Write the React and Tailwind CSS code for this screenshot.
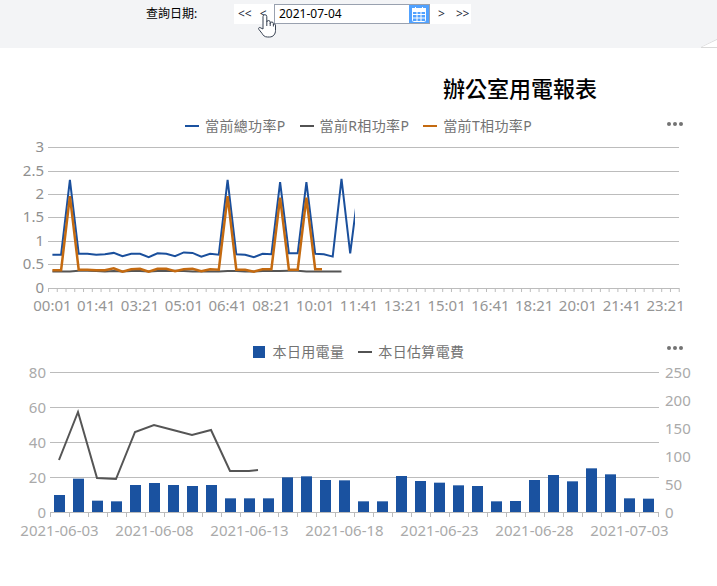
import React from 'react';

const TIMES = ['00:01', '01:41', '03:21', '05:01', '06:41', '08:21', '10:01', '11:41', '13:21', '15:01', '16:41', '18:21', '20:01', '21:41', '23:21'];
const DATES = ['2021-06-03', '2021-06-08', '2021-06-13', '2021-06-18', '2021-06-23', '2021-06-28', '2021-07-03'];

const TOTAL = [0.7, 0.7, 2.3, 0.72, 0.72, 0.7, 0.71, 0.74, 0.67, 0.72, 0.72, 0.65, 0.73, 0.72, 0.67, 0.75, 0.74, 0.66, 0.72, 0.7, 2.3, 0.71, 0.7, 0.65, 0.72, 0.71, 2.25, 0.73, 0.73, 2.25, 0.72, 0.71, 0.66, 2.32, 0.73, 2.2];
const PHASE_R = [0.34, 0.34, 0.34, 0.36, 0.36, 0.35, 0.34, 0.35, 0.34, 0.35, 0.35, 0.34, 0.35, 0.35, 0.36, 0.35, 0.34, 0.34, 0.34, 0.34, 0.35, 0.35, 0.34, 0.34, 0.35, 0.35, 0.35, 0.36, 0.36, 0.34, 0.34, 0.34, 0.34, 0.34];
const PHASE_T = [0.37, 0.37, 1.95, 0.38, 0.38, 0.37, 0.37, 0.41, 0.34, 0.39, 0.4, 0.34, 0.4, 0.4, 0.35, 0.39, 0.4, 0.35, 0.39, 0.38, 1.95, 0.38, 0.38, 0.34, 0.39, 0.39, 1.92, 0.38, 0.38, 1.92, 0.39, 0.39];
// top edge of each bar, read off the picture
const BAR_TOPS = [480, 431, 497, 499, 450, 444, 450, 453, 450, 490, 490, 490, 427, 424, 435, 436, 499, 499, 423, 438, 443, 451, 453, 499, 498, 435, 420, 439, 400, 418, 490, 491];
const COST = [[59, 460], [78, 412], [97, 478], [116, 479], [135, 432], [154, 425], [173, 430], [192, 435], [211, 430], [230, 471], [249, 471], [258, 470]];

const gridColor = '#bcbcbc';

function Legend({ children, dotsTop }) {
    return (
        <div className="relative flex h-5 items-center justify-center gap-3.5 text-sm tracking-wide text-neutral-500">
            {children}
            <div className={`absolute right-8.5 flex gap-0.5 ${dotsTop}`}>
                <span className="size-1 rounded-full bg-neutral-500" />
                <span className="size-1 rounded-full bg-neutral-500" />
                <span className="size-1 rounded-full bg-neutral-500" />
            </div>
        </div>
    );
}

function LineKey({ className, label }) {
    return (
        <div className="flex items-center gap-1.5">
            <span className={`h-0.5 w-3.5 ${className}`} />
            <span>{label}</span>
        </div>
    );
}

function PowerChart() {
    const x = (i) => 48 + 8.76 * (i + 0.5);
    const y = (v) => 287.5 - v * 46.8;
    const points = (data) => data.map((v, i) => `${x(i).toFixed(1)},${y(v).toFixed(1)}`).join(' ');

    return (
        <svg className="block" width="717" height="190" viewBox="0 136 717 190">
            <defs>
                <clipPath id="total-clip"><rect x="48" y="136" width="307" height="160" /></clipPath>
                <clipPath id="t-clip"><rect x="48" y="136" width="274" height="160" /></clipPath>
            </defs>
            {[0, 0.5, 1, 1.5, 2, 2.5, 3].map((v) => (
                <g key={v}>
                    <line x1="48" x2="679" y1={Math.round(y(v)) + 0.5} y2={Math.round(y(v)) + 0.5} stroke={gridColor} />
                    <text x="44" y={y(v) + 5} textAnchor="end" fontSize="15" fill="#8f8f8f">{v}</text>
                </g>
            ))}
            {Array.from({ length: 73 }, (_, i) => (
                <line key={i} x1={48.5 + 8.76 * i} x2={48.5 + 8.76 * i} y1="288" y2="292" stroke={gridColor} />
            ))}
            {TIMES.map((t, i) => (
                <text key={t} x={52.4 + 43.8 * i} y="311" textAnchor="middle" fontSize="15" fill="#969696">{t}</text>
            ))}
            <polyline points={points(TOTAL)} fill="none" stroke="#1a4f9c" strokeWidth="2" clipPath="url(#total-clip)" />
            <polyline points={points(PHASE_R)} fill="none" stroke="#555555" strokeWidth="2" />
            <polyline points={points(PHASE_T)} fill="none" stroke="#c46a10" strokeWidth="2.5" clipPath="url(#t-clip)" />
        </svg>
    );
}

function EnergyChart() {
    const yTicks = [0, 20, 40, 60, 80];
    const rightTicks = [0, 50, 100, 150, 200, 250];

    return (
        <svg className="block" width="717" height="190" viewBox="0 362 717 190">
            {yTicks.map((v, i) => {
                const y = 512.5 - i * 35;
                return (
                    <g key={v}>
                        <line x1="50" x2="659" y1={y} y2={y} stroke={gridColor} />
                        <text x="46" y={y + 5} textAnchor="end" fontSize="15" fill="#aaaaaa">{v}</text>
                    </g>
                );
            })}
            {rightTicks.map((v, i) => (
                <text key={v} x="665" y={512.5 - i * 28 + 5} fontSize="15" fill="#aaaaaa">{v}</text>
            ))}
            {Array.from({ length: 33 }, (_, i) => (
                <line key={i} x1={50.5 + 19 * i} x2={50.5 + 19 * i} y1="513" y2="517" stroke={gridColor} />
            ))}
            {BAR_TOPS.map((top, i) => {
                const y = 335 + top / 3;
                return <rect key={i} x={54 + 19 * i} y={y} width="11" height={512 - y} fill="#1a52a0" />;
            })}
            <polyline points={COST.map((p) => p.join(',')).join(' ')} fill="none" stroke="#555555" strokeWidth="2" />
            {DATES.map((d, i) => (
                <text key={d} x={59.5 + 95 * i} y="536" textAnchor="middle" fontSize="15" fill="#aaaaaa">{d}</text>
            ))}
        </svg>
    );
}

function CalendarIcon() {
    return (
        <svg width="14" height="15" viewBox="0 0 14 15" fill="none" stroke="white">
            <rect x="0.5" y="1.5" width="13" height="13" rx="1" />
            <rect x="0.5" y="1.5" width="13" height="3" fill="white" />
            <path d="M3.5 0v3M10.5 0v3M0.5 7.5h13M0.5 11h13M5 4.5v10M9 4.5v10" />
        </svg>
    );
}

function HandCursor() {
    return (
        <svg className="absolute left-64.5 top-3.5" width="18" height="24" viewBox="0 0 18 24" fill="white" stroke="#374151" strokeWidth="1" strokeLinejoin="round">
            <path d="M5 15V2.6a1.9 1.9 0 0 1 3.8 0V8a1.7 1.7 0 0 1 3.4 .5V9.500a1.600 1.600 0 0 1 3.200 .2v1a1.100 1.100 0 0 1 2.100 .4v5.400c0 3.500-2.200 6.500-6 6.500h-2c-3 0-4.300-1.600-5.400-3.500L.8 15.300c-.6-1 .2-2.200 1.300-1.700z" />
            <path d="M8.800 8v4M12.200 9v3M15.400 10v2.500" fill="none" />
        </svg>
    );
}

function DateBar() {
    return (
        <div className="relative flex h-12 items-start bg-gray-100 pl-36 pt-1 text-xs text-black">
            <span className="ml-0.5 w-22 leading-5">查詢日期:</span>
            <div className="flex h-5 items-center bg-white pr-0.5 text-gray-800">
                <div className="flex w-10 gap-2 pl-1">
                    <span>&lt;&lt;</span>
                    <span>&lt;</span>
                </div>
                <div className="flex h-full w-39 items-center justify-between border border-gray-400 pl-1">
                    <span className="text-black">2021-07-04</span>
                    <span className="flex h-full w-5 items-center justify-center bg-blue-400">
                        <CalendarIcon />
                    </span>
                </div>
                <span className="ml-2 w-4.5">&gt;</span>
                <span className="tracking-tight">&gt;&gt;</span>
            </div>
            <HandCursor />
            <svg className="absolute bottom-0 right-0" width="16" height="9" viewBox="0 0 16 9">
                <path d="M0 8.5h16M0 8.5L16 0.5" fill="none" stroke="#d9d9d9" />
                <path d="M1 8L16 1v7z" fill="white" />
            </svg>
        </div>
    );
}

export default function App() {
    return (
        <div className="min-h-screen bg-white font-['Noto_Sans','Noto_Sans_CJK_TC',sans-serif]">
            <DateBar />
            <h1 className="flex justify-end pr-30 pt-6 text-[22px] font-medium leading-8 text-black">辦公室用電報表</h1>
            <div className="mt-3">
                <Legend dotsTop="top-1.5">
                    <LineKey className="bg-[#1a52a0]" label="當前總功率P" />
                    <LineKey className="bg-neutral-600" label="當前R相功率P" />
                    <LineKey className="bg-[#c46a10]" label="當前T相功率P" />
                </Legend>
                <PowerChart />
            </div>
            <div className="mt-4">
                <Legend dotsTop="top-1">
                    <div className="flex items-center gap-2">
                        <span className="size-3 bg-[#1a52a0]" />
                        <span>本日用電量</span>
                    </div>
                    <LineKey className="bg-neutral-600" label="本日估算電費" />
                </Legend>
                <EnergyChart />
            </div>
        </div>
    );
}
